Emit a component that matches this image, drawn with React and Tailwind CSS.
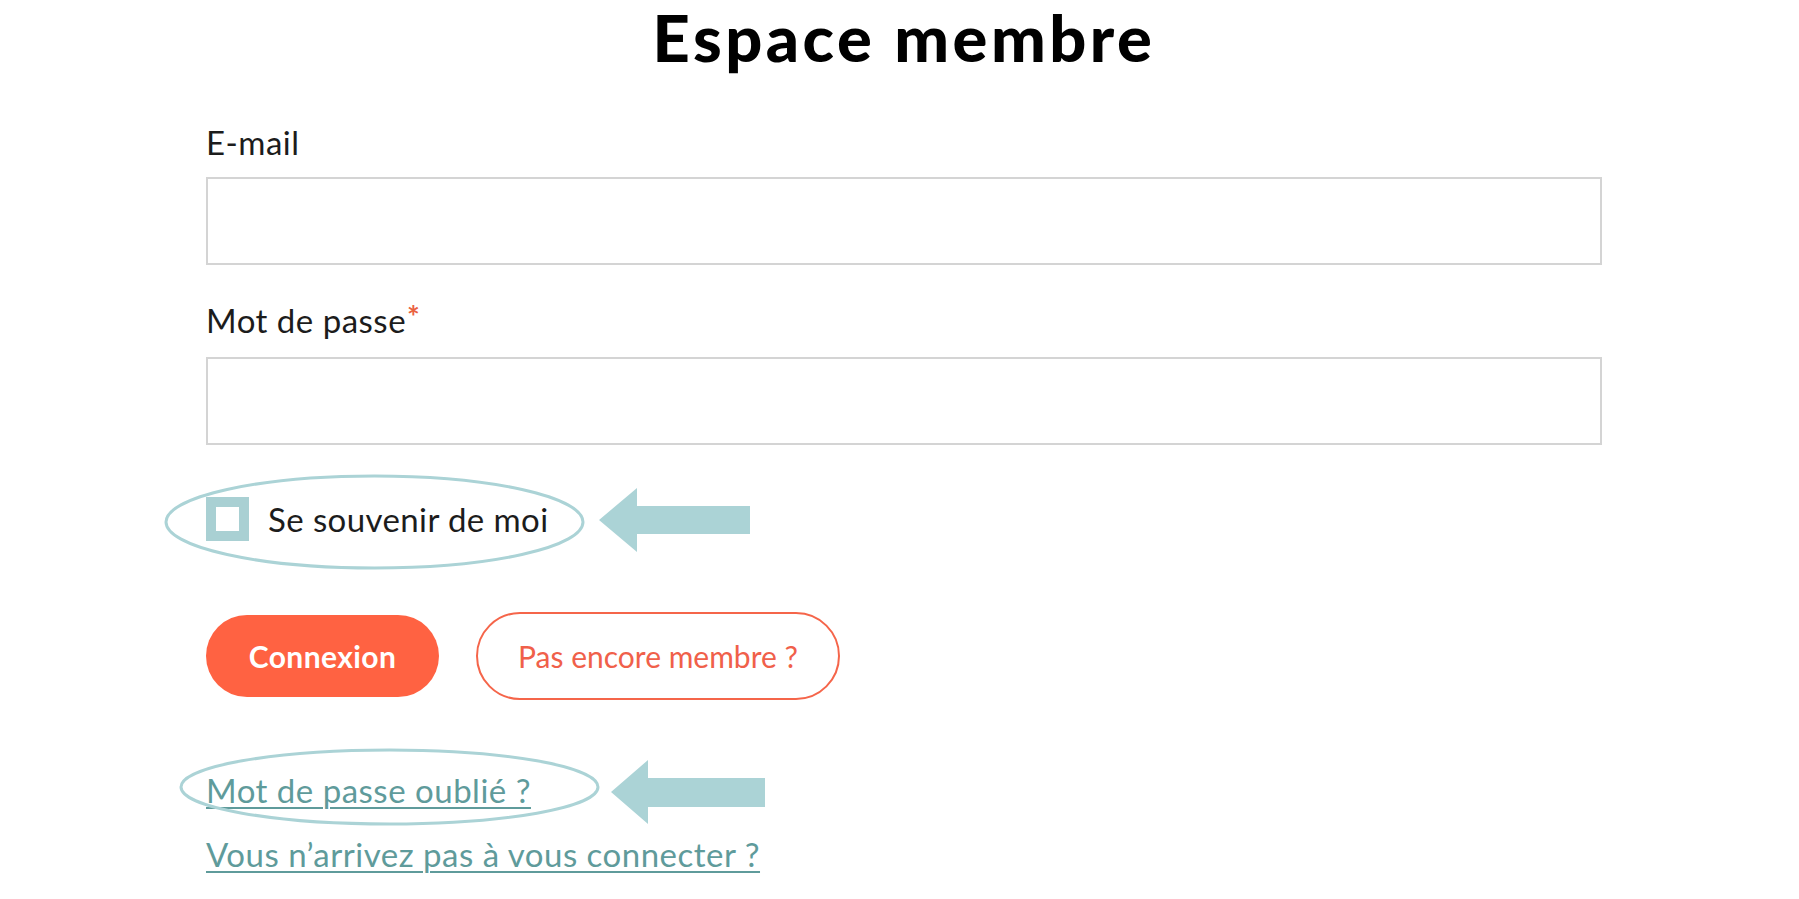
export default function App() {
  const teal = "#abd3d6";
  return (
    <div className="min-h-[899px] w-full bg-white [font-family:Lato,'Open_Sans',sans-serif] text-[#1c1c1c]">
      <div className="ml-[206px] w-[1396px] pt-[5px]">
        <h1 className="text-center text-[65px] leading-none font-black text-black tracking-[3.5px]">
          Espace membre
        </h1>

        <div className="mt-[56px] text-[33px] leading-none tracking-[0.5px]">E-mail</div>
        <div className="mt-[18px] h-[88px] w-full border-2 border-[#d4d4d4] bg-white"></div>

        <div className="mt-[39px] text-[33px] leading-none tracking-[0.5px]">
          Mot de passe<span className="relative top-[-3px] ml-[1px] text-[30px] font-bold text-[#ea623f] align-top">*</span>
        </div>
        <div className="mt-[20px] h-[88px] w-full border-2 border-[#d4d4d4] bg-white"></div>

        <div className="relative mt-[52px] flex h-[44px] items-center">
          <div className="h-[44px] w-[43px] border-[10px] border-[#a9d0d3] bg-white"></div>
          <span className="ml-[19px] text-[33px] leading-none tracking-[0.4px]">Se souvenir de moi</span>
          <svg className="absolute left-[-42px] top-[-23px]" width="421" height="96" viewBox="0 0 421 96">
            <ellipse cx="210.5" cy="48" rx="208.5" ry="46" fill="none" stroke={teal} strokeWidth="3" />
          </svg>
          <svg className="absolute left-[393px] top-[-9px]" width="151" height="64" viewBox="0 0 151 64">
            <path d="M0 32 L38 0 L38 18 L151 18 L151 46 L38 46 L38 64 Z" fill={teal} />
          </svg>
        </div>

        <div className="mt-[71px] flex items-center gap-[37px]">
          <button className="h-[82px] w-[233px] rounded-full bg-[#ff6242] text-[30px] font-bold text-white leading-none tracking-[0.4px]">
            Connexion
          </button>
          <button className="h-[88px] w-[364px] rounded-full border-[2.5px] border-[#f5654a] bg-white text-[30px] text-[#f0604a] leading-none">
            Pas encore membre ?
          </button>
        </div>

        <div className="relative mt-[74px] w-fit">
          <a className="block text-[33px] leading-none tracking-[0.5px] text-[#5f9b9b] underline decoration-[2px] underline-offset-[4px]">
            Mot de passe oublié ?
          </a>
          <svg className="absolute left-[-27px] top-[-26px]" width="421" height="78" viewBox="0 0 421 78">
            <ellipse cx="210.5" cy="39" rx="208.5" ry="37" fill="none" stroke={teal} strokeWidth="3" />
          </svg>
          <svg className="absolute left-[405px] top-[-14px]" width="154" height="64" viewBox="0 0 154 64">
            <path d="M0 32 L37 0 L37 18 L154 18 L154 47 L37 47 L37 64 Z" fill={teal} />
          </svg>
        </div>

        <a className="mt-[31px] block w-fit text-[33px] leading-none tracking-[0.5px] text-[#5f9b9b] underline decoration-[2px] underline-offset-[4px]">
          Vous n’arrivez pas à vous connecter ?
        </a>
      </div>
    </div>
  );
}
